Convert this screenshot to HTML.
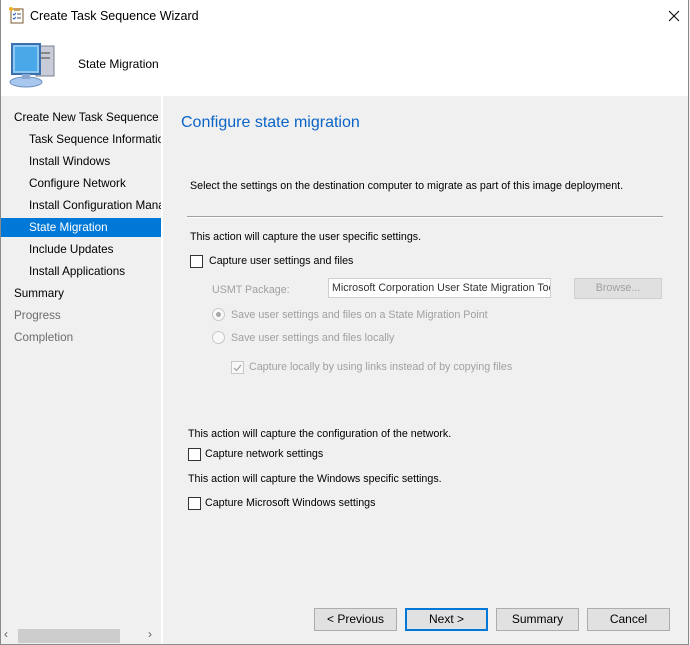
<!DOCTYPE html>
<html><head><meta charset="utf-8"><style>
*{margin:0;padding:0;box-sizing:border-box}
body{width:690px;height:645px;position:relative;background:#f0f0f0;font-family:"Liberation Sans",sans-serif;overflow:hidden;color:#000}
.abs{position:absolute;white-space:nowrap}
#frame{position:absolute;left:0;top:0;width:689px;height:645px;border:1px solid #8a8a8a;border-top:none}
#title{position:absolute;left:0;top:0;width:688px;height:32px;background:#fff}
#hdr{position:absolute;left:0;top:32px;width:688px;height:64px;background:#fff}
#left{position:absolute;left:1px;top:96px;width:160px;height:529px;background:#f0f0f0}
#div{position:absolute;left:161px;top:96px;width:2px;height:549px;background:#fff}
.l{position:absolute;font-size:11.7px;white-space:nowrap;overflow:hidden;width:146px;height:22px;line-height:22px}
.r{font-size:10.7px;color:#000}
.g{color:#a0a0a0}
.cb{position:absolute;width:13px;height:13px;border:1px solid #333;background:#fff}
.btn{position:absolute;top:608px;height:23px;width:83px;background:#e1e1e1;border:1px solid #adadad;font-size:12px;text-align:center;line-height:21px}
</style></head><body>
<div id="title"></div>
<svg class="abs" style="left:9px;top:7px" width="16" height="17" viewBox="0 0 16 17"><rect x="2" y="2" width="12" height="14" fill="#fff" stroke="#7a5a30"/><rect x="5" y="1" width="6" height="3" fill="#c9a060"/><path d="M4 7l1 1 2-2M4 11l1 1 2-2" stroke="#2060c0" fill="none"/><path d="M8 7h4M8 11h4" stroke="#555"/><circle cx="2" cy="2" r="2" fill="#f0b020"/></svg>
<div class="abs" style="left:30px;top:9px;font-size:12.5px">Create Task Sequence Wizard</div>
<svg class="abs" style="left:668px;top:10px" width="12" height="12"><path d="M1 1L11 11M11 1L1 11" stroke="#000" stroke-width="1"/></svg>
<div id="hdr"></div>
<svg class="abs" style="left:8px;top:40px" width="52" height="50" viewBox="0 0 52 50"><rect x="28" y="6" width="18" height="30" fill="#c8ccd8" stroke="#7a8090"/><rect x="32" y="12" width="10" height="2" fill="#888"/><rect x="32" y="17" width="10" height="2" fill="#888"/><ellipse cx="18" cy="42" rx="16" ry="5" fill="#a8c8f0" stroke="#6a90c0"/><path d="M4 4h28v30H4z" fill="#8cc8f0" stroke="#3a70b0" stroke-width="2"/><rect x="7" y="7" width="22" height="24" fill="#4aa8e8"/><rect x="14" y="34" width="8" height="5" fill="#8aa8d0"/></svg>
<div class="abs" style="left:78px;top:57px;font-size:12px">State Migration</div>
<div id="left"></div>
<div id="div"></div>
<div class="abs" style="left:1px;top:218px;width:160px;height:19px;background:#0078d7"></div>
<div class="l" style="left:14px;top:107px">Create New Task Sequence</div>
<div class="l" style="left:29px;top:129px;width:132px">Task Sequence Information</div>
<div class="l" style="left:29px;top:151px">Install Windows</div>
<div class="l" style="left:29px;top:173px">Configure Network</div>
<div class="l" style="left:29px;top:195px;width:132px">Install Configuration Manager</div>
<div class="l" style="left:29px;top:217px;color:#fff">State Migration</div>
<div class="l" style="left:29px;top:239px">Include Updates</div>
<div class="l" style="left:29px;top:261px">Install Applications</div>
<div class="l" style="left:14px;top:283px">Summary</div>
<div class="l" style="left:14px;top:305px;color:#6d6d6d">Progress</div>
<div class="l" style="left:14px;top:327px;color:#6d6d6d">Completion</div>
<div class="abs" style="left:1px;top:627px;width:160px;height:17px;background:#f0f0f0"></div>
<div class="abs" style="left:18px;top:629px;width:102px;height:14px;background:#cdcdcd"></div>
<div class="abs" style="left:4px;top:627px;font-size:12px;color:#606060">‹</div>
<div class="abs" style="left:148px;top:627px;font-size:12px;color:#606060">›</div>
<div class="abs" style="left:181px;top:114px;font-size:16px;color:#0a64c8">Configure state migration</div>
<div class="abs r" style="left:190px;top:180px">Select the settings on the destination computer to migrate as part of this image deployment.</div>
<div class="abs" style="left:187px;top:216px;width:476px;height:1px;background:#a0a0a0"></div>
<div class="abs" style="left:187px;top:217px;width:476px;height:1px;background:#fff"></div>
<div class="abs r" style="left:190px;top:231px">This action will capture the user specific settings.</div>
<div class="cb" style="left:190px;top:255px"></div>
<div class="abs r" style="left:209px;top:255px">Capture user settings and files</div>
<div class="abs r g" style="left:212px;top:284px">USMT Package:</div>
<div class="abs" style="left:328px;top:278px;width:223px;height:20px;background:#fff;border:1px solid #cfcfcf;font-size:10.7px;line-height:18px;padding-left:3px;overflow:hidden;color:#333">Microsoft Corporation User State Migration Tool</div>
<div class="abs" style="left:574px;top:278px;width:88px;height:21px;background:#e0e0e0;border:1px solid #cfcfcf;font-size:10.7px;text-align:center;line-height:19px;color:#a0a0a0">Browse...</div>
<div class="abs" style="left:212px;top:308px;width:13px;height:13px;border-radius:50%;border:1px solid #c8c8c8;background:#f8f8f8"><div style="margin:3px;width:5px;height:5px;border-radius:50%;background:#a8a8a8"></div></div>
<div class="abs r g" style="left:231px;top:309px">Save user settings and files on a State Migration Point</div>
<div class="abs" style="left:212px;top:331px;width:13px;height:13px;border-radius:50%;border:1px solid #c8c8c8;background:#f8f8f8"></div>
<div class="abs r g" style="left:231px;top:332px">Save user settings and files locally</div>
<div class="abs" style="left:231px;top:361px;width:13px;height:13px;border:1px solid #c8c8c8;background:#f8f8f8"></div>
<svg class="abs" style="left:232px;top:362px" width="11" height="11"><path d="M2 6l2.5 2.5L9 3" stroke="#a0a0a0" fill="none" stroke-width="1.2"/></svg>
<div class="abs r g" style="left:249px;top:361px">Capture locally by using links instead of by copying files</div>
<div class="abs r" style="left:188px;top:428px">This action will capture the configuration of the network.</div>
<div class="cb" style="left:188px;top:448px"></div>
<div class="abs r" style="left:205px;top:448px">Capture network settings</div>
<div class="abs r" style="left:188px;top:473px">This action will capture the Windows specific settings.</div>
<div class="cb" style="left:188px;top:497px"></div>
<div class="abs r" style="left:205px;top:497px">Capture Microsoft Windows settings</div>
<div class="btn" style="left:314px">&lt; Previous</div>
<div class="btn" style="left:405px;border:2px solid #0078d7;line-height:19px">Next &gt;</div>
<div class="btn" style="left:496px">Summary</div>
<div class="btn" style="left:587px">Cancel</div>
<div id="frame"></div>
</body></html>
